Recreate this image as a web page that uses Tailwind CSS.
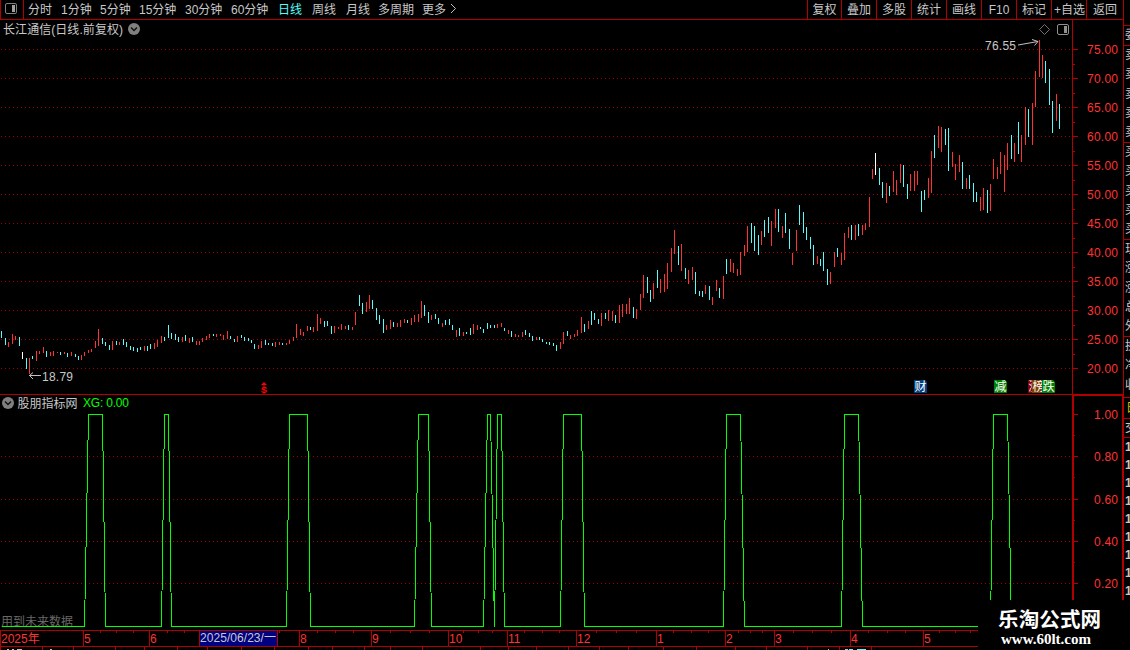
<!DOCTYPE html>
<html lang="zh-CN">
<head>
  <meta charset="UTF-8">
  <meta name="viewport" content="width=device-width, initial-scale=1.0">
  <title>长江通信 日线</title>
  <script src="https://cdn.jsdelivr.net/npm/@tailwindcss/browser@4"></script>
</head>
<body class="bg-black overflow-hidden">
  <div class="relative flex w-[1130px] h-[650px] overflow-hidden bg-black text-[#c8c8c8] text-[12px] font-['Liberation_Sans','Noto_Sans_CJK_SC',sans-serif]">
    <div class="flex flex-col w-[1123px] shrink-0">

      <!-- toolbar -->
      <div class="flex h-[20px] shrink-0 border-b border-[#b00000] leading-[20px] whitespace-nowrap">
        <div class="w-[24px] shrink-0 border-x border-[#b00000] pl-[4px] pt-[3px]">
          <svg width="12" height="11" viewBox="0 0 12 11" class="block">
            <rect x="0.5" y="0.5" width="11" height="10" rx="1.5" fill="none" stroke="#808080"/>
            <rect x="7" y="2" width="3" height="7" fill="#a0a0a0"/>
          </svg>
        </div>
        <div class="flex w-[783px] pl-[4px]">
          <span class="w-[33px]">分时</span>
          <span class="w-[39px]">1分钟</span>
          <span class="w-[39px]">5分钟</span>
          <span class="w-[46px]">15分钟</span>
          <span class="w-[46px]">30分钟</span>
          <span class="w-[47px]">60分钟</span>
          <span class="w-[34px] text-[#54fcfc]">日线</span>
          <span class="w-[34px]">周线</span>
          <span class="w-[32px]">月线</span>
          <span class="w-[44px]">多周期</span>
          <span class="w-[28px]">更多</span>
          <svg width="8" height="18" viewBox="0 0 8 18" fill="none" stroke="#c0c0c0"><path d="M1 4 L5.5 8.5 L1 13"/></svg>
        </div>
        <div class="flex text-center">
          <span class="w-[34px] border-l border-[#b00000]">复权</span>
          <span class="w-[35px] border-l border-[#b00000]">叠加</span>
          <span class="w-[35px] border-l border-[#b00000]">多股</span>
          <span class="w-[35px] border-l border-[#b00000]">统计</span>
          <span class="w-[35px] border-l border-[#b00000]">画线</span>
          <span class="w-[35px] border-l border-[#b00000]">F10</span>
          <span class="w-[35px] border-l border-[#b00000]">标记</span>
          <span class="w-[35px] border-l border-[#b00000] pl-[1px]">+自选</span>
          <span class="w-[37px] border-l border-[#b00000]">返回</span>
        </div>
      </div>

      <!-- daily bars -->
      <div class="h-[375px] shrink-0 border-b border-[#b00000]">
        <svg id="price" class="block" width="1123" height="374" viewBox="0 20 1123 374">
          <g id="priceGrid" shape-rendering="crispEdges"></g>
          <g id="bars" shape-rendering="crispEdges"></g>
          <rect x="1072" y="20" width="1" height="374" fill="#b00000"/>
          <text x="3" y="34" fill="#c8c8c8" textLength="120">长江通信(日线.前复权)</text>
          <circle cx="134" cy="29" r="6" fill="#808080"/>
          <path d="M131 27.5 L134 30.5 L137 27.5" fill="none" stroke="#111" stroke-width="1.5"/>
          <path d="M1039.5 29.5 L1044.5 24.5 L1049.5 29.5 L1044.5 34.5 Z" fill="none" stroke="#707070"/>
          <rect x="1057.5" y="24.5" width="11" height="10" rx="1.5" fill="none" stroke="#909090"/>
          <rect x="1064" y="26" width="3" height="7" fill="#909090"/>
          <text x="985" y="50" fill="#c8c8c8" textLength="31">76.55</text>
          <path d="M1018 45 L1038 41.5 M1032 39.5 L1038 41.5 L1034.5 45.5" fill="none" stroke="#c0c0c0"/>
          <text x="42" y="381" fill="#c8c8c8" textLength="31">18.79</text>
          <path d="M29 375.5 H41 M33 372.5 L29.5 375.5 L33 379" fill="none" stroke="#c0c0c0"/>
          <path d="M261 385 L264 382 L267 385 Z M263.5 384 H264.5 V394 H263.5 Z" fill="#ff0000"/>
          <text x="260.7" y="393" fill="#ff0000" font-size="9.5" font-weight="bold">S</text>
          <g font-size="12" fill="#fff">
            <path d="M914 380 H925 L927 382 V393 H914 Z" fill="#004080"/>
            <text x="914.5" y="391">财</text>
            <path d="M994 380 H1005 L1007 382 V393 H994 Z" fill="#008000"/>
            <text x="994.5" y="391">减</text>
            <path d="M1028 380 H1039 L1041 382 V393 H1028 Z" fill="#800000"/>
            <text x="1028.5" y="391">涨</text>
            <path d="M1032 380 H1043 L1045 382 V393 H1032 Z" fill="#804000"/>
            <text x="1032.5" y="391">榜</text>
            <path d="M1042 380 H1053 L1055 382 V393 H1042 Z" fill="#008000"/>
            <text x="1042.5" y="391">跌</text>
          </g>
        </svg>
      </div>

      <!-- indicator -->
      <svg id="xg" class="block shrink-0" width="1123" height="235" viewBox="0 395 1123 235">
        <g id="xgGrid" shape-rendering="crispEdges"></g>
        <text x="1" y="626" fill="#686868">用到未来数据</text>
        <polyline fill="none" stroke="#00ff00" shape-rendering="crispEdges" points="
          1.5,626.5 84.5,626.5 88.5,414.5 102.5,414.5 105.5,626.5
          161.5,626.5 164.5,414.5 168.5,414.5 171.5,626.5
          286.5,626.5 289.5,414.5 307.5,414.5 310.5,626.5
          414.5,626.5 418.5,414.5 428.5,414.5 431.5,626.5
          483.5,626.5 487.5,414.5 490.5,414.5 494.5,626.5
          497.5,414.5 501.5,414.5 504.5,626.5
          560.5,626.5 563.5,414.5 581.5,414.5 584.5,626.5
          723.5,626.5 726.5,414.5 740.5,414.5 744.5,626.5
          841.5,626.5 844.5,414.5 858.5,414.5 862.5,626.5
          990.5,626.5 993.5,414.5 1007.5,414.5 1011.5,626.5"/>
        <path d="M1072 395 H1123 V396 H1074 V630 H1072 Z M1122 395 H1123 V630 H1122 Z" fill="#b00000"/>
        <circle cx="8" cy="403" r="6" fill="#808080"/>
        <path d="M5 401.5 L8 404.5 L11 401.5" fill="none" stroke="#111" stroke-width="1.5"/>
        <text x="17.5" y="408" fill="#c8c8c8">股朋指标网</text>
        <text x="83" y="407" fill="#00ff00" textLength="46">XG: 0.00</text>
      </svg>

      <!-- time axis -->
      <svg id="time" class="block shrink-0" width="1123" height="20" viewBox="0 630 1123 20">
        <g id="timeGrid" shape-rendering="crispEdges"></g>
        <rect x="200" y="631" width="77" height="15" fill="#000080"/>
        <text x="1" y="643" fill="#ff3232">2025年</text>
        <text x="200" y="642" fill="#c8c8c8" textLength="76">2025/06/23/一</text>
        <g id="months" fill="#ff3232"></g>
        <path d="M7 649.5 H9 M12 649.5 H14 M17 649.5 H22 M50 649.5 H52 M828 649.5 H829 M845 649.5 H848" stroke="#c0c0c0"/>
        <path d="M849 649.5 H853 M857 649.5 H866" stroke="#54fcfc"/>
      </svg>
    </div>

    <!-- quote panel, clipped by the window edge -->
    <div class="w-[7px] shrink-0 overflow-hidden border-l border-[#b00000] whitespace-nowrap">
      <div class="h-[26px] border-b border-[#b00000]"></div>
      <div class="h-[20px] border-b border-[#b00000] pl-[1px] leading-[19px]">委比</div>
      <div class="h-[97px] border-b border-[#b00000] pl-[1px] leading-[19.3px]">卖五<br>卖四<br>卖三<br>卖二<br>卖一</div>
      <div class="h-[97px] border-b border-[#b00000] pl-[1px] leading-[19.3px]">买一<br>买二<br>买三<br>买四<br>买五</div>
      <div class="h-[97px] border-b border-[#b00000] pl-[1px] leading-[19.3px]">现价<br>涨跌<br>涨幅<br>总量<br>外盘</div>
      <div class="h-[61px] border-b border-[#b00000] pl-[1px] leading-[19.3px]">换手<br>净资<br>收益</div>
      <div class="h-[21px] border-b border-[#b00000] pl-[2px] leading-[20px] text-[#c8c800]">日</div>
      <div class="h-[19px] border-b border-[#b00000] pl-[1px] leading-[18px]">交易</div>
      <div class="pl-[1px] leading-[18px] font-bold">14<br>14<br>14<br>14<br>14<br>14<br>14<br>14<br>14</div>
    </div>

    <!-- site mark -->
    <div class="absolute left-[978px] top-[600px] w-[152px] h-[50px] bg-black">
      <svg width="152" height="50" viewBox="978 600 152 50" fill="#fff">
        <text x="998" y="627" font-size="20.5" font-weight="bold" textLength="103">乐淘公式网</text>
        <text x="1001" y="644" font-size="14" font-weight="bold" textLength="90" lengthAdjust="spacingAndGlyphs" class="font-['Liberation_Serif',serif]">www.60lt.com</text>
      </svg>
    </div>
  </div>

  <script>
    const NS = 'http://www.w3.org/2000/svg';
    const RED = '#b00000';

    function rect(parent, x, y, w, h, fill) {
      const el = document.createElementNS(NS, 'rect');
      el.setAttribute('x', x);
      el.setAttribute('y', y);
      el.setAttribute('width', w);
      el.setAttribute('height', h);
      el.setAttribute('fill', fill);
      parent.appendChild(el);
    }

    function label(parent, x, y, text, width) {
      const el = document.createElementNS(NS, 'text');
      el.setAttribute('x', x);
      el.setAttribute('y', y);
      el.setAttribute('fill', '#ff3232');
      if (width) el.setAttribute('textLength', width);
      el.textContent = text;
      parent.appendChild(el);
    }

    function dots(parent, y) {
      for (let x = 1; x < 1072; x += 4) rect(parent, x, y, 1, 1, '#a00000');
    }

    // colour, x, high, low
    const bars = `
      c 1 331 338,c 5 338 345,r 8 342 347,r 12 334 344,r 15 336 340,c 19 337 346,w 22 352 359,c 26 358 369,r 29 358 374,c 32 356 359,
      r 36 351 361,r 39 351 354,r 43 347 353,c 46 351 357,r 50 352 356,r 53 351 356,r 57 352 353,c 60 352 355,r 64 352 354,c 67 353 357,
      r 71 352 356,c 75 354 357,c 78 356 360,r 81 355 360,r 84 352 356,r 88 350 353,r 91 349 352,r 95 341 348,r 98 329 346,c 102 338 344,
      c 105 342 346,c 109 345 350,r 112 341 350,c 116 341 345,r 119 342 345,c 123 339 345,c 126 342 347,c 130 346 350,c 133 347 351,c 137 348 352,
      c 140 347 350,r 144 346 351,c 147 346 351,c 150 344 349,r 154 343 349,r 157 340 347,r 161 336 343,c 164 337 341,c 168 325 338,c 171 333 339,
      c 175 334 340,c 178 337 342,r 182 337 342,c 185 335 341,r 189 338 343,c 192 337 342,r 196 341 345,r 199 341 345,r 202 338 342,r 206 336 340,
      r 209 334 338,c 213 334 336,r 216 334 337,r 220 334 336,r 223 335 340,r 227 331 339,c 230 336 339,c 234 339 342,r 237 336 342,c 241 335 338,
      c 244 337 341,c 248 338 341,c 251 340 343,c 254 344 349,r 258 345 349,r 261 341 348,c 265 340 345,c 268 343 345,c 272 343 346,r 275 342 347,
      r 279 342 345,c 282 343 345,r 286 343 345,r 289 340 344,r 293 337 341,r 296 324 338,r 300 329 335,r 303 332 336,r 307 326 331,c 310 327 330,
      r 313 327 332,r 317 314 331,r 320 318 324,c 324 321 327,c 327 321 326,c 331 326 334,r 334 326 333,r 338 327 329,r 341 324 330,r 345 326 329,
      c 348 325 330,r 352 327 330,r 355 312 325,c 359 295 306,c 362 303 314,r 366 302 312,r 369 295 309,c 372 300 309,c 376 308 320,c 379 315 324,
      c 383 319 333,r 386 325 330,r 390 320 329,c 393 322 327,r 397 323 327,r 400 320 327,r 404 319 323,c 407 320 323,r 411 318 325,r 414 315 322,
      r 418 314 322,r 421 301 318,c 424 305 316,c 428 312 323,r 431 315 320,c 435 314 319,c 438 318 324,r 442 323 327,c 445 320 325,c 449 319 325,
      c 452 325 330,r 456 330 337,c 459 328 336,r 463 332 336,c 466 332 334,c 470 328 335,r 473 324 334,r 477 325 330,c 480 327 329,c 483 329 333,
      c 487 323 329,c 490 325 328,c 494 325 328,r 497 324 328,r 501 323 327,c 504 328 331,r 508 330 334,c 511 331 337,r 515 334 337,r 518 335 337,
      r 522 332 337,c 525 330 335,c 529 333 337,c 532 336 341,r 536 337 340,c 539 337 340,c 542 339 342,c 546 342 344,c 549 342 345,c 553 343 346,
      c 556 345 351,r 560 342 349,r 563 332 344,c 567 331 336,r 570 335 339,r 574 334 337,r 577 330 336,r 581 317 333,c 584 324 332,r 588 321 329,
      c 591 311 325,c 594 313 320,c 598 319 324,r 601 313 326,c 605 313 319,r 608 310 321,r 612 311 321,c 615 315 323,r 619 305 323,r 622 304 317,
      r 626 304 314,r 629 298 314,c 633 307 318,r 636 309 319,r 640 294 310,r 643 275 298,c 647 277 293,c 650 290 302,r 653 283 299,c 657 270 288,
      r 660 279 293,r 664 274 292,r 667 263 289,r 671 248 272,r 674 230 254,c 678 246 265,r 681 244 271,c 685 268 279,r 688 270 284,r 692 267 280,
      c 695 272 294,c 699 291 296,c 702 291 297,r 705 285 294,c 709 286 300,r 712 297 305,r 716 280 291,c 719 288 298,r 723 276 299,c 726 259 274,
      r 730 259 272,r 733 263 273,r 737 269 276,r 740 252 275,r 744 245 256,r 747 226 252,c 751 223 243,c 754 226 251,c 758 235 255,r 761 231 245,
      c 764 220 237,c 768 217 233,r 771 221 246,r 775 209 228,c 778 209 232,r 782 226 238,c 785 213 233,c 789 229 249,r 792 253 265,r 796 230 251,
      c 799 205 225,c 803 212 233,c 806 227 240,c 810 237 249,c 813 245 265,r 817 256 264,c 820 259 266,c 823 252 271,c 827 269 285,r 830 272 284,
      r 834 252 267,c 837 248 257,r 841 253 265,r 844 233 260,r 848 227 238,c 851 225 240,r 855 225 240,c 858 224 236,r 862 225 235,r 865 223 230,
      r 869 197 227,r 872 169 179,w 875 153 175,c 879 168 185,c 882 182 198,r 886 183 203,c 889 186 196,r 893 171 192,r 896 180 195,r 900 164 183,
      c 903 165 187,c 907 184 199,r 910 174 191,r 914 171 191,r 917 171 185,c 921 191 212,c 924 190 200,r 928 178 198,r 931 151 193,c 934 135 158,
      r 938 126 148,r 941 127 152,c 945 129 145,c 948 128 171,r 952 152 167,r 955 164 180,r 959 155 172,c 962 162 189,r 966 178 189,c 969 175 189,
      c 973 183 202,c 976 192 202,r 980 197 211,r 983 188 210,c 987 190 213,r 990 184 211,r 993 159 179,r 997 167 179,r 1000 152 174,r 1004 155 192,
      r 1007 143 170,c 1011 135 159,r 1014 143 162,c 1018 122 154,r 1021 135 162,r 1025 107 145,c 1028 109 137,r 1032 103 145,r 1035 71 107,r 1039 40 77,
      r 1042 55 78,c 1045 61 83,c 1049 69 105,c 1052 101 133,r 1056 94 121,c 1059 104 129`;
    const colours = { r: '#ff3232', c: '#54fcfc', w: '#ffffff' };

    const barGroup = document.getElementById('bars');
    bars.split(',').forEach((item) => {
      const [c, x, high, low] = item.trim().split(' ');
      rect(barGroup, x, high, 1, low - high, colours[c]);
    });

    // price scale
    const priceGrid = document.getElementById('priceGrid');
    for (let i = 0; i < 12; i++) {
      const y = 49 + i * 29;
      dots(priceGrid, y);
      rect(priceGrid, 1073, y, 5, 1, RED);
      if (i < 11) rect(priceGrid, 1073, y + 15, 2, 1, RED);
      label(priceGrid, 1087, y + 5, (75 - i * 5).toFixed(2), 31);
    }

    // indicator scale
    const xgGrid = document.getElementById('xgGrid');
    [414, 456, 499, 541, 583].forEach((y, i) => {
      if (i > 0) dots(xgGrid, y);
      rect(xgGrid, 1074, y, 4, 1, RED);
      if (i < 4) rect(xgGrid, 1074, y + 21, 1, 1, RED);
      label(xgGrid, 1094, y + 5, (1 - i * 0.2).toFixed(2), 24);
    });

    // months and weeks
    const timeGrid = document.getElementById('timeGrid');
    rect(timeGrid, 0, 630, 1123, 1, RED);
    rect(timeGrid, 0, 646, 1123, 1, RED);
    [0, 83, 149, 199, 277, 299, 371, 448, 507, 576, 656, 725, 774, 850, 923].forEach((x) => rect(timeGrid, x, 630, 1, 16, RED));
    [100, 116, 133, 167, 184, 279, 317, 335, 353, 390, 410, 429, 463, 478, 492, 524, 542, 559, 596, 616, 636, 673, 691, 708,
      738, 750, 762, 793, 812, 831, 868, 887, 905, 939, 955, 970].forEach((x) => rect(timeGrid, x, 631, 1, 2, RED));
    [0, 42, 73, 115, 144, 177, 207, 241, 274, 308, 332, 364, 390, 422, 480, 508, 536, 568, 599, 628, 663, 696,
      735, 766, 807, 839, 871].forEach((x) => rect(timeGrid, x, 647, 1, 3, RED));

    const months = document.getElementById('months');
    [[84, '5'], [150, '6'], [300, '8'], [372, '9'], [449, '10'], [508, '11'], [577, '12'], [657, '1'], [726, '2'], [775, '3'], [851, '4'], [924, '5']]
      .forEach(([x, text]) => label(months, x, 643, text));
  </script>
</body>
</html>
